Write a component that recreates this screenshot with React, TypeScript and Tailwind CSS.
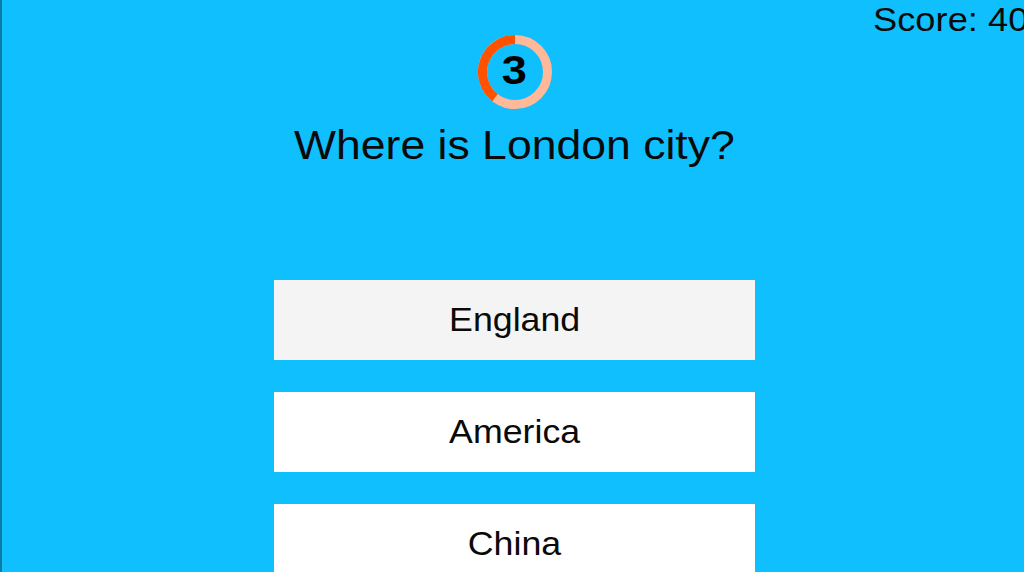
import React from "react";

const font = { fontFamily: '"Liberation Sans", Arial, Helvetica, sans-serif' };

function Timer() {
  return (
    <div className="relative w-[74px] h-[74px] flex items-center justify-center">
      <svg width="74" height="74" viewBox="0 0 74 74" className="absolute inset-0">
        <circle cx="37" cy="37" r="32.5" fill="none" stroke="#ffb898" strokeWidth="9" />
        <path d="M16.99 62.61 A32.5 32.5 0 0 1 37 4.5" fill="none" stroke="#ff5200" strokeWidth="9" />
      </svg>
      <span className="relative inline-block scale-x-110 text-[41px] leading-none font-bold text-black -mt-[3px] -ml-[1px]">
        3
      </span>
    </div>
  );
}

function Answer({ label, active }: { label: string; active?: boolean }) {
  return (
    <div
      className={
        "w-[481px] h-[80px] shrink-0 flex items-center justify-center " +
        (active ? "bg-[#f4f4f4]" : "bg-white")
      }
    >
      <span className="inline-block scale-x-110 text-[32.5px] leading-none text-[#0a0a0a]">{label}</span>
    </div>
  );
}

export default function App() {
  return (
    <div
      className="relative w-full h-[572px] overflow-hidden bg-[#10bffe] border-l-2 border-[#0a7ca6]"
      style={font}
    >
      <div className="absolute left-[871px] top-[3px] whitespace-nowrap">
        <span className="inline-block origin-left scale-x-110 text-[33px] leading-none text-[#0a0a0a]">
          Score: 40
        </span>
      </div>
      <div className="flex flex-col items-center pl-[3px] pt-[35px]">
        <Timer />
        <div className="mt-[15.5px] h-[40.5px]">
          <span className="inline-block scale-x-110 text-[40.5px] leading-none text-[#0a0a0a] whitespace-nowrap">
            Where is London city?
          </span>
        </div>
        <div className="mt-[115px] flex flex-col gap-[32px]">
          <Answer label="England" active />
          <Answer label="America" />
          <Answer label="China" />
        </div>
      </div>
    </div>
  );
}
